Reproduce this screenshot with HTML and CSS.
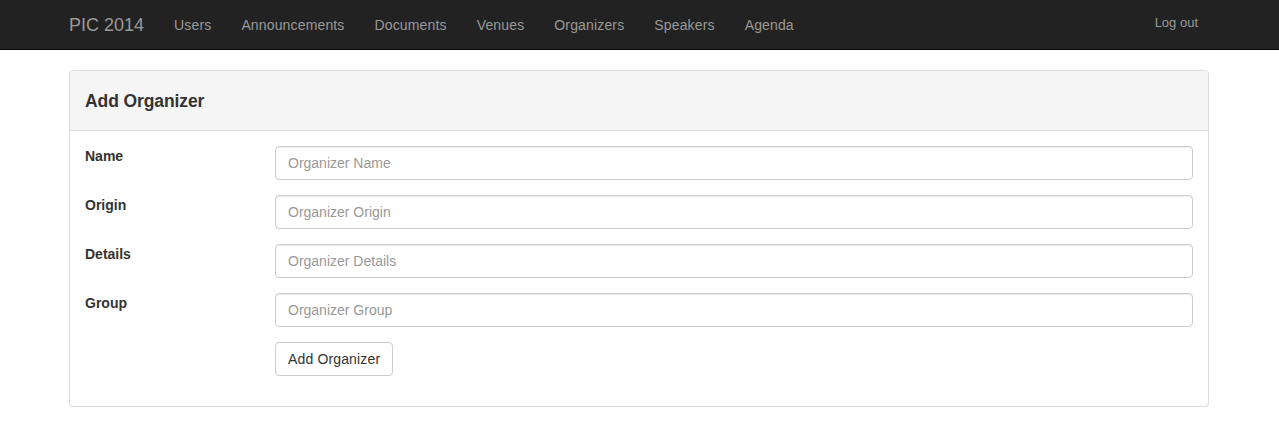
FILE: index.html
```html
<!DOCTYPE html>
<html>
<head>
<meta charset="utf-8">
<link rel="stylesheet" href="styles.css">
</head>
<body>
<nav class="navbar">
  <div class="container nav-inner">
    <a class="brand" href="#">PIC 2014</a>
    <ul class="nav">
      <li><a href="#">Users</a></li>
      <li><a href="#">Announcements</a></li>
      <li><a href="#">Documents</a></li>
      <li><a href="#">Venues</a></li>
      <li><a href="#">Organizers</a></li>
      <li><a href="#">Speakers</a></li>
      <li><a href="#">Agenda</a></li>
    </ul>
    <a class="logout" href="#">Log out</a>
  </div>
</nav>
<div class="container">
  <div class="panel">
    <div class="panel-heading"><h3 class="panel-title">Add Organizer</h3></div>
    <div class="panel-body">
      <form class="form">
        <div class="form-group">
          <label class="control-label">Name</label>
          <div class="field"><input class="form-control" type="text" placeholder="Organizer Name"></div>
        </div>
        <div class="form-group">
          <label class="control-label">Origin</label>
          <div class="field"><input class="form-control" type="text" placeholder="Organizer Origin"></div>
        </div>
        <div class="form-group">
          <label class="control-label">Details</label>
          <div class="field"><input class="form-control" type="text" placeholder="Organizer Details"></div>
        </div>
        <div class="form-group">
          <label class="control-label">Group</label>
          <div class="field"><input class="form-control" type="text" placeholder="Organizer Group"></div>
        </div>
        <div class="form-group">
          <span class="control-label"></span>
          <div class="field"><button class="btn" type="button">Add Organizer</button></div>
        </div>
      </form>
    </div>
  </div>
</div>
</body>
</html>
```
FILE: styles.css
```css
* { box-sizing: border-box; }
html, body { margin: 0; padding: 0; }
body {
  font-family: "Liberation Sans", Arial, sans-serif;
  font-size: 14px;
  line-height: 20px;
  color: #333;
  background: #fff;
}
a { text-decoration: none; }
.container {
  width: 1170px;
  margin-left: calc(50% - 585.5px);
  padding: 0 15px;
}
.navbar {
  background: #222;
  border-bottom: 1px solid #080808;
  height: 50px;
  margin-bottom: 20px;
}
.nav-inner {
  display: flex;
  align-items: flex-start;
  height: 49px;
}
.brand {
  color: #999;
  font-size: 18px;
  line-height: 20px;
  padding: 15px 15px 14px 15px;
  margin-left: -15px;
}
.nav {
  display: flex;
  list-style: none;
  margin: 0;
  padding: 0;
}
.nav a {
  display: block;
  color: #999;
  padding: 15px 15px 14px 15px;
  line-height: 20px;
  font-size: 14px;
  letter-spacing: 0.15px;
}
.logout {
  margin-left: auto;
  color: #999;
  font-size: 13px;
  line-height: 20px;
  padding: 13px 11px 0 0;
}
.panel {
  border: 1px solid #ddd;
  border-radius: 4px;
  background: #fff;
  box-shadow: 0 1px 1px rgba(0,0,0,0.05);
}
.panel-heading {
  background: #f5f5f5;
  border-bottom: 1px solid #ddd;
  border-radius: 3px 3px 0 0;
  padding: 20px 15px 18px 15px;
}
.panel-title {
  margin: 0;
  font-size: 17.5px;
  line-height: 21px;
  font-weight: bold;
  color: #333;
  letter-spacing: -0.1px;
}
.panel-body {
  padding: 15px;
}
.form-group {
  display: flex;
  margin-bottom: 15px;
}
.control-label {
  flex: 0 0 190px;
  font-weight: bold;
  line-height: 20px;
}
.field { flex: 1; }
.form-control {
  display: block;
  width: 100%;
  height: 34px;
  padding: 6px 12px;
  font-family: inherit;
  font-size: 14px;
  line-height: 20px;
  color: #555;
  background: #fff;
  border: 1px solid #ccc;
  border-radius: 4px;
  box-shadow: inset 0 1px 1px rgba(0,0,0,0.075);
  outline: none;
}
.form-control::placeholder { color: #999; }
.btn {
  display: inline-block;
  height: 34px;
  padding: 6px 12px;
  font-family: inherit;
  font-size: 14px;
  line-height: 20px;
  color: #333;
  background: #fff;
  border: 1px solid #ccc;
  border-radius: 4px;
  letter-spacing: 0.15px;
  cursor: pointer;
}
```
